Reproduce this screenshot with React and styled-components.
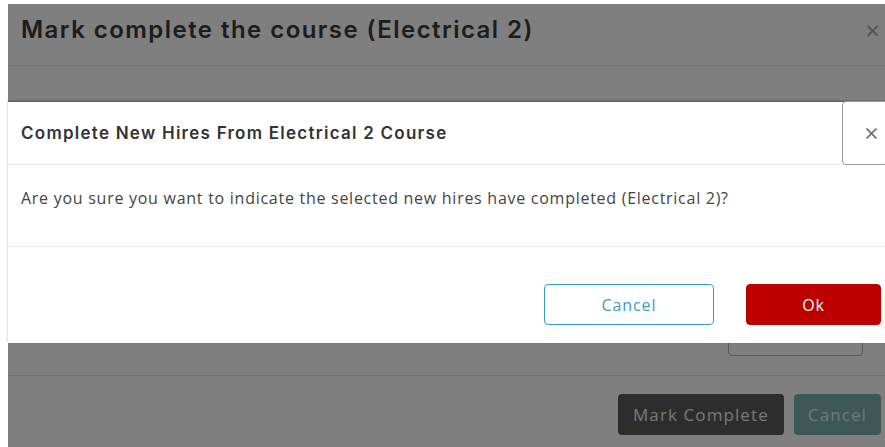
import React from 'react';
import styled, { createGlobalStyle } from 'styled-components';

const GlobalStyle = createGlobalStyle`
  html, body {
    margin: 0;
    padding: 0;
    background: #ffffff;
    overflow: hidden;
  }
`;

const Stage = styled.div`
  position: relative;
  width: 885px;
  height: 447px;
  padding: 4px 0 0 8px;
  box-sizing: border-box;
  overflow: hidden;
  font-family: "Open Sans", "Liberation Sans", sans-serif;
`;

/* underlying course modal */
const CourseModal = styled.div`
  height: 100%;
  margin-right: -20px;
  background: #ffffff;
  display: flex;
  flex-direction: column;
`;

const CourseHeader = styled.div`
  height: 62px;
  box-sizing: border-box;
  display: flex;
  align-items: flex-start;
  justify-content: space-between;
  padding: 12px 24px 0 13px;
  border-bottom: 1px solid #e6e6e6;
`;

const CourseTitle = styled.h2`
  margin: 0;
  font-family: Inter, "Open Sans", sans-serif;
  font-weight: 600;
  font-size: 24px;
  line-height: 28px;
  letter-spacing: 1.45px;
  color: #3a3a3a;
`;

const PlainClose = styled.span`
  font-family: "DejaVu Sans", sans-serif;
  font-size: 20px;
  line-height: 20px;
  margin-top: 4px;
  color: #a8a8a8;
`;

const CourseBody = styled.div`
  flex: 1;
  display: flex;
  align-items: flex-end;
  justify-content: flex-end;
  padding: 0 42px 19px 0;
  border-bottom: 1px solid #dcdcdc;
`;

const OutlineButton = styled.div`
  width: 135px;
  height: 41px;
  box-sizing: border-box;
  border: 1px solid #9ab8b3;
  border-radius: 4px;
`;

const CourseFooter = styled.div`
  height: 71px;
  box-sizing: border-box;
  display: flex;
  justify-content: flex-end;
  align-items: flex-start;
  gap: 10px;
  padding: 18px 24px 0 0;
`;

const FooterButton = styled.div`
  height: 41px;
  box-sizing: border-box;
  padding: 0 ${p => p.$pad}px;
  display: flex;
  align-items: center;
  border-radius: 4px;
  background: ${p => p.$bg};
  color: ${p => p.$color};
  font-size: 17px;
  letter-spacing: 1.1px;
`;

const Backdrop = styled.div`
  position: absolute;
  top: 4px;
  left: 8px;
  right: 0;
  bottom: 0;
  background: rgba(0, 0, 0, 0.5);
`;

/* confirmation dialog on top */
const Dialog = styled.div`
  position: absolute;
  top: 102px;
  left: 8px;
  right: -3px;
  background: #ffffff;
  box-shadow: 0 -1px 2px rgba(0, 0, 0, 0.35);
`;

const DialogHeader = styled.div`
  height: 63px;
  box-sizing: border-box;
  display: flex;
  align-items: center;
  justify-content: space-between;
  padding-left: 13px;
  border-bottom: 1px solid #e8e8e8;
`;

const DialogTitle = styled.h3`
  margin: 0;
  font-family: Inter, "Open Sans", sans-serif;
  font-weight: 600;
  font-size: 17px;
  letter-spacing: 1.25px;
  color: #333333;
`;

const CloseBox = styled.div`
  align-self: flex-start;
  margin-top: -1px;
  width: 46px;
  height: 64px;
  box-sizing: border-box;
  border: 1px solid #9a9a9a;
  border-radius: 4px;
  display: flex;
  align-items: center;
  padding-left: 22px;
`;

const DialogBody = styled.div`
  height: 82px;
  box-sizing: border-box;
  padding: 22px 13px 0;
  border-bottom: 1px solid #e9e9e9;
  font-size: 16px;
  line-height: 22px;
  letter-spacing: 0.73px;
  color: #444444;
`;

const DialogFooter = styled.div`
  height: 96px;
  box-sizing: border-box;
  display: flex;
  justify-content: flex-end;
  align-items: flex-start;
  gap: 32px;
  padding: 37px 7px 0 0;
`;

const DialogButton = styled.button`
  width: ${p => p.$w}px;
  height: 41px;
  box-sizing: border-box;
  border-radius: 4px;
  font-family: "Open Sans", sans-serif;
  font-size: 16px;
  letter-spacing: 0.9px;
  border: 1px solid ${p => (p.$primary ? '#bb0000' : '#3a9cc6')};
  background: ${p => (p.$primary ? '#bb0000' : '#ffffff')};
  color: ${p => (p.$primary ? '#ffffff' : '#3a9cc4')};
`;

function CrossIcon() {
  return (
    <svg width="13" height="13" viewBox="0 0 13 13">
      <path d="M1.5 1.5 L11.5 11.5 M11.5 1.5 L1.5 11.5" stroke="#666" strokeWidth="1.7" />
    </svg>
  );
}

export default function App() {
  return (
    <>
      <GlobalStyle />
      <Stage>
        <CourseModal>
          <CourseHeader>
            <CourseTitle>Mark complete the course (Electrical 2)</CourseTitle>
            <PlainClose>×</PlainClose>
          </CourseHeader>
          <CourseBody>
            <OutlineButton />
          </CourseBody>
          <CourseFooter>
            <FooterButton $bg="#5a5a5a" $color="#eeeeee" $pad={15}>Mark Complete</FooterButton>
            <FooterButton $bg="#7ab0ac" $color="#dcf3f0" $pad={14}>Cancel</FooterButton>
          </CourseFooter>
        </CourseModal>
        <Backdrop />
        <Dialog>
          <DialogHeader>
            <DialogTitle>Complete New Hires From Electrical 2 Course</DialogTitle>
            <CloseBox>
              <CrossIcon />
            </CloseBox>
          </DialogHeader>
          <DialogBody>
            Are you sure you want to indicate the selected new hires have completed (Electrical 2)?
          </DialogBody>
          <DialogFooter>
            <DialogButton $w={170}>Cancel</DialogButton>
            <DialogButton $w={135} $primary>Ok</DialogButton>
          </DialogFooter>
        </Dialog>
      </Stage>
    </>
  );
}
